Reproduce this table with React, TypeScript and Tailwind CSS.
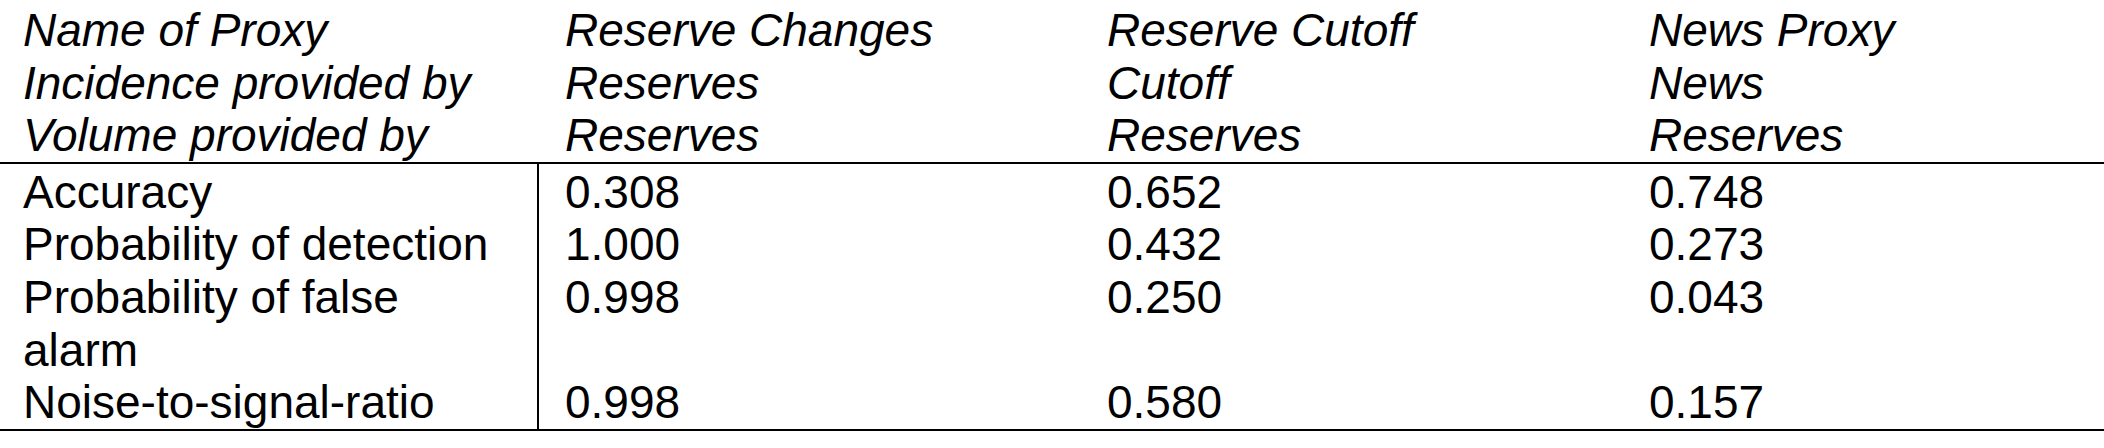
import React from "react";

const header: string[][] = [
  ["Name of Proxy", "Incidence provided by", "Volume provided by"],
  ["Reserve Changes", "Reserves", "Reserves"],
  ["Reserve Cutoff", "Cutoff", "Reserves"],
  ["News Proxy", "News", "Reserves"],
];

const rows: { label: string; values: string[] }[] = [
  { label: "Accuracy", values: ["0.308", "0.652", "0.748"] },
  { label: "Probability of detection", values: ["1.000", "0.432", "0.273"] },
  { label: "Probability of false alarm", values: ["0.998", "0.250", "0.043"] },
  { label: "Noise-to-signal-ratio", values: ["0.998", "0.580", "0.157"] },
];

export default function App() {
  return (
    <div
      className="w-[2104px] h-[448px] bg-white text-black overflow-hidden text-[46px] leading-[52.6px]"
      style={{ fontFamily: '"Liberation Sans", Arial, sans-serif' }}
    >
      <div className="grid grid-cols-[539px_542px_542px_1fr] pt-[4px] border-b-2 border-black italic">
        {header.map((col, i) => (
          <div key={i} className={i === 0 ? "pl-[23px]" : "pl-[26px]"}>
            {col.map((line, j) => (
              <div key={j} className="whitespace-nowrap">
                {line}
              </div>
            ))}
          </div>
        ))}
      </div>
      <div className="grid grid-cols-[539px_542px_542px_1fr] border-b-2 border-black">
        {rows.map((r, ri) => (
          <React.Fragment key={ri}>
            <div
              className={`border-r-2 border-black pl-[23px] pr-[33px] ${ri === 0 ? "pt-[2px]" : ""}`}
            >
              {r.label}
            </div>
            {r.values.map((v, vi) => (
              <div key={vi} className={`pl-[26px] ${ri === 0 ? "pt-[2px]" : ""}`}>
                {v}
              </div>
            ))}
          </React.Fragment>
        ))}
      </div>
    </div>
  );
}
